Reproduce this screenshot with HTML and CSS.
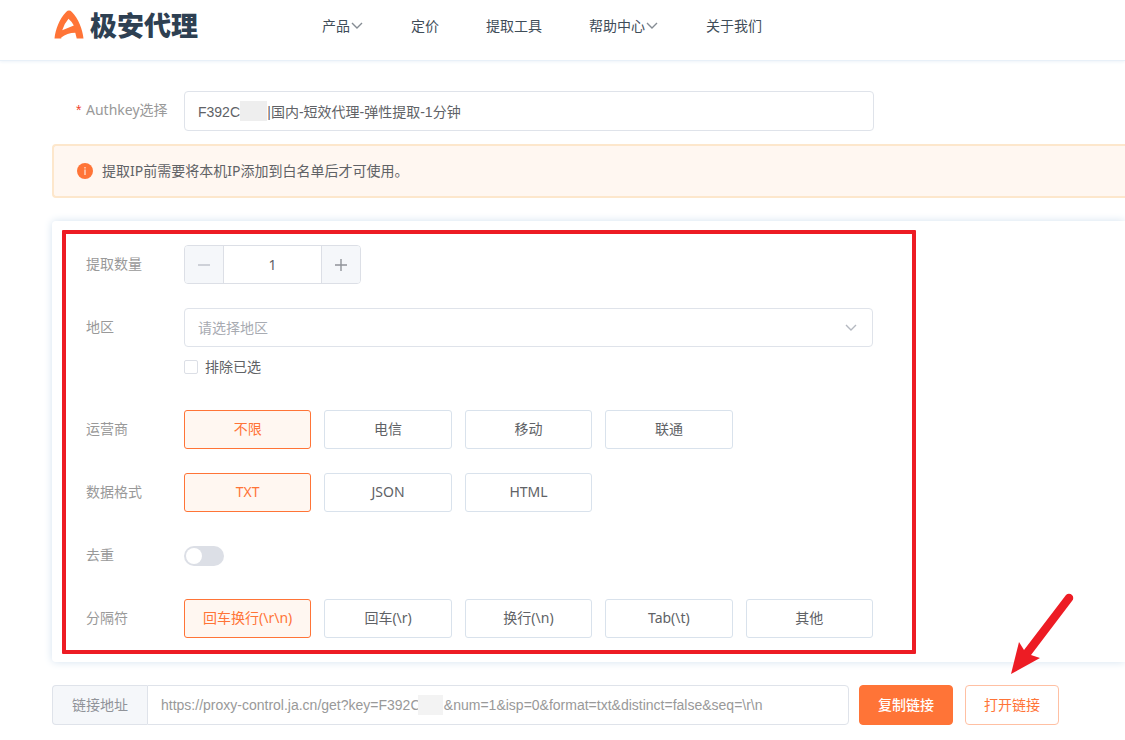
FILE: index.html
```
<!doctype html>
<html lang="zh-CN">
<head>
  <meta charset="UTF-8">
  <meta name="viewport" content="width=device-width, initial-scale=1">
  <title>极安代理 - 提取工具</title>
  <link rel="stylesheet" href="styles.css">
</head>
<body>
<header class="header">
  <a class="logo" href="#">
    <svg width="30" height="30" viewBox="0 0 30 30" aria-hidden="true">
      <path fill="#ff7437" fill-rule="evenodd" d="M0 29.500C1 20 5 9 12 2Q15 -1 18 2C25 9 29 20 30 29.500H23L21.500 23.500Q13 23.500 7 28.500V29.500ZM8 21L20 16Q18 12 14.500 9Q10 14 8 21Z"/>
    </svg>
    <span>极安代理</span>
  </a>
  <nav class="nav">
    <a href="#">产品<svg class="caret" viewBox="0 0 14 14"><path d="M2 4l5 5 5-5"/></svg></a>
    <a href="#">定价</a>
    <a href="#">提取工具</a>
    <a href="#">帮助中心<svg class="caret" viewBox="0 0 14 14"><path d="M2 4l5 5 5-5"/></svg></a>
    <a href="#">关于我们</a>
  </nav>
</header>

<main class="main">
  <div class="row">
    <label class="label required" for="authkey">Authkey选择</label>
    <div class="authkey">
      <input class="input" id="authkey" type="text" readonly value="F392C&nbsp;&nbsp;&nbsp;&nbsp;&nbsp;&nbsp;&nbsp;|国内-短效代理-弹性提取-1分钟">
      <span class="mask"></span>
    </div>
  </div>

  <div class="alert" role="alert">
    <svg width="16" height="16" viewBox="0 0 16 16" aria-hidden="true">
      <circle cx="8" cy="8" r="8" fill="#ff7437"/>
      <path fill="#fff" d="M7.500 4h1v1.500h-1zM7.500 6.500h1V12h-1z"/>
    </svg>
    <span>提取IP前需要将本机IP添加到白名单后才可使用。</span>
  </div>

  <form class="card">
    <div class="row">
      <label class="label" for="num">提取数量</label>
      <div class="stepper">
        <button type="button" disabled aria-label="减少"><svg viewBox="0 0 14 14"><path d="M1 7h12"/></svg></button>
        <input id="num" type="text" value="1">
        <button type="button" aria-label="增加"><svg viewBox="0 0 14 14"><path d="M1 7h12M7 1v12"/></svg></button>
      </div>
    </div>

    <div class="row">
      <label class="label" for="area">地区</label>
      <div class="field">
        <div class="select">
          <select class="input" id="area">
            <option>请选择地区</option>
          </select>
          <svg class="caret" viewBox="0 0 14 14"><path d="M2 5l5 5 5-5"/></svg>
        </div>
        <label class="check"><input type="checkbox">排除已选</label>
      </div>
    </div>

    <div class="row" role="radiogroup" aria-labelledby="isp">
      <span class="label" id="isp">运营商</span>
      <div class="field options">
        <label><input type="radio" name="isp" checked><span>不限</span></label>
        <label><input type="radio" name="isp"><span>电信</span></label>
        <label><input type="radio" name="isp"><span>移动</span></label>
        <label><input type="radio" name="isp"><span>联通</span></label>
      </div>
    </div>

    <div class="row" role="radiogroup" aria-labelledby="format">
      <span class="label" id="format">数据格式</span>
      <div class="field options">
        <label><input type="radio" name="format" checked><span>TXT</span></label>
        <label><input type="radio" name="format"><span>JSON</span></label>
        <label><input type="radio" name="format"><span>HTML</span></label>
      </div>
    </div>

    <div class="row">
      <label class="label" for="distinct">去重</label>
      <div class="field switch-wrap">
        <input class="switch" id="distinct" type="checkbox" role="switch">
      </div>
    </div>

    <div class="row" role="radiogroup" aria-labelledby="seq">
      <span class="label" id="seq">分隔符</span>
      <div class="field options">
        <label><input type="radio" name="seq" checked><span>回车换行(\r\n)</span></label>
        <label><input type="radio" name="seq"><span>回车(\r)</span></label>
        <label><input type="radio" name="seq"><span>换行(\n)</span></label>
        <label><input type="radio" name="seq"><span>Tab(\t)</span></label>
        <label><input type="radio" name="seq"><span>其他</span></label>
      </div>
    </div>
    <div class="highlight"></div>
  </form>

  <div class="link-bar">
    <div class="link-group">
      <label for="url">链接地址</label>
      <div class="url">
        <input class="input" id="url" type="text" readonly value="https://proxy-control.ja.cn/get?key=F392C&nbsp;&nbsp;&nbsp;&nbsp;&nbsp;&nbsp;&amp;num=1&amp;isp=0&amp;format=txt&amp;distinct=false&amp;seq=\r\n">
        <span class="mask"></span>
      </div>
    </div>
    <div class="actions">
      <button class="btn btn-primary" type="button">复制链接</button>
      <button class="btn" type="button">打开链接</button>
      <svg class="arrow" width="72" height="88" viewBox="0 0 72 88" aria-hidden="true">
        <path d="M6 84L14 52L19 60L61 5A4 4 0 0 1 67 11L26 65L35 68Z"/>
      </svg>
    </div>
  </div>
</main>
</body>
</html>
```
FILE: styles.css
```
* {
  box-sizing: border-box;
}

body {
  margin: 0;
  overflow-x: hidden;
  background: #fff;
  color: #606266;
  font: 14px/20px "Noto Sans", "Noto Sans CJK SC", sans-serif;
}

a {
  color: inherit;
  text-decoration: none;
}

input, select, button {
  margin: 0;
  font: inherit;
  color: inherit;
}

/* header */
.header {
  display: flex;
  align-items: center;
  height: 61px;
  padding: 0 0 8px 54px;
  border-bottom: 1px solid #e8f0f8;
  box-shadow: 0 1px 3px #edf3f9;
}

.logo {
  display: flex;
  align-items: center;
  gap: 6px;
  width: 268px;
  color: #2e4052;
  font-size: 27px;
  line-height: 30px;
  font-weight: 900;
}

.logo svg {
  height: 29px;
  margin-bottom: 4px;
}

.nav {
  display: flex;
  gap: 47px;
  color: #3f4d59;
}

.nav a {
  display: flex;
  align-items: center;
  white-space: nowrap;
}

.caret {
  width: 14px;
  height: 14px;
  fill: none;
  stroke: #858c93;
  stroke-width: 1.4;
}

/* form rows */
.main {
  padding: 30px 0 15px 52px;
}

.row {
  display: flex;
}

.label {
  flex: none;
  width: 132px;
  padding-left: 34px;
  color: #999;
  line-height: 38px;
}

.required {
  padding-left: 24px;
}

.required::before {
  content: "*";
  display: inline-block;
  width: 10px;
  color: #f0442e;
  font-family: "Liberation Sans", sans-serif;
}

.input {
  width: 100%;
  height: 40px;
  padding: 0 13px;
  border: 1px solid #dfe3ea;
  border-radius: 4px;
  outline: none;
  background: #fff;
  font-family: "Liberation Sans", "Noto Sans CJK SC", sans-serif;
}

.authkey {
  position: relative;
  flex: 1;
  max-width: 690px;
}

.mask {
  position: absolute;
  top: 10px;
  left: 56px;
  width: 27px;
  height: 20px;
  background: #eee;
}

.alert {
  display: flex;
  align-items: center;
  gap: 9px;
  height: 54px;
  margin: 13px 0 23px;
  padding-left: 23px;
  border: 2px solid #fde7cc;
  border-right: 0;
  border-radius: 4px 0 0 4px;
  background: #fff7f1;
}

.card {
  position: relative;
  display: grid;
  gap: 24px;
  margin-bottom: 23px;
  padding: 24px 0;
  border-radius: 4px 0 0 4px;
  box-shadow: 0 0 9px #d4e2ef;
}

.field {
  flex: 1;
  max-width: 689px;
}

.stepper {
  display: flex;
  width: 177px;
  height: 39px;
  border: 1px solid #dcdfe6;
  border-radius: 4px;
  overflow: hidden;
}

.stepper input {
  flex: 1;
  min-width: 0;
  border: 0;
  text-align: center;
  outline: none;
}

.stepper button {
  display: flex;
  align-items: center;
  justify-content: center;
  width: 39px;
  padding: 0;
  border: 0;
  border-right: 1px solid #dcdfe6;
  background: #f5f7fa;
}

.stepper button:last-child {
  border-right: 0;
  border-left: 1px solid #dcdfe6;
}

.stepper svg {
  width: 14px;
  height: 14px;
  fill: none;
  stroke: #909399;
  stroke-width: 1.4;
}

.stepper button:disabled svg {
  stroke: #c0c4cc;
}

.select {
  position: relative;
}

.select .input {
  display: block;
  height: 39px;
  appearance: none;
  color: #a8abb2;
}

.select .caret {
  position: absolute;
  top: 12px;
  right: 15px;
  stroke: #b4b8c0;
  pointer-events: none;
}

.check {
  display: flex;
  align-items: center;
  gap: 7px;
  width: max-content;
  height: 39px;
}

.check input {
  width: 14px;
  height: 14px;
  border: 1px solid #dcdfe6;
  border-radius: 2px;
  background: #fff;
  appearance: none;
}

.check input:checked {
  background: #ff7437;
}

.options {
  display: grid;
  grid-template-columns: repeat(5, 1fr);
  gap: 13px;
}

.options label {
  position: relative;
}

.options input {
  position: absolute;
  opacity: 0;
}

.options span {
  display: block;
  height: 39px;
  border: 1px solid #d9e2ec;
  border-radius: 3px;
  line-height: 36px;
  text-align: center;
  white-space: nowrap;
}

.options input:checked + span {
  border-color: #ff7437;
  background: #fff7f1;
  color: #ff7437;
}

.switch-wrap {
  display: flex;
  align-items: center;
  height: 39px;
}

.switch {
  width: 40px;
  height: 20px;
  padding: 2px;
  border-radius: 10px;
  background: #dcdfe6;
  appearance: none;
}

.switch::before {
  content: "";
  display: block;
  width: 16px;
  height: 16px;
  border-radius: 50%;
  background: #fff;
}

.switch:checked {
  padding-left: 22px;
  background: #ff7437;
}

.highlight {
  position: absolute;
  top: 9px;
  bottom: 8px;
  left: 10px;
  width: 854px;
  border: 4px solid #ed1c24;
  border-radius: 1px;
  pointer-events: none;
}

/* result link */
.link-bar {
  display: flex;
  gap: 10px;
  max-width: 1007px;
}

.link-group {
  display: flex;
  flex: 1;
}

.link-group label {
  width: 95px;
  border: 1px solid #dfe3ea;
  border-right: 0;
  border-radius: 4px 0 0 4px;
  background: #f5f7fa;
  color: #909399;
  line-height: 38px;
  text-align: center;
}

.url {
  position: relative;
  flex: 1;
}

.url .input {
  border-radius: 0 4px 4px 0;
  color: #999;
}

.url .mask {
  left: 271px;
  width: 25px;
  background: #f3f3f3;
}

.actions {
  position: relative;
  display: flex;
  gap: 12px;
}

.btn {
  width: 94px;
  height: 40px;
  padding: 0;
  border: 1px solid #ffc0a3;
  border-radius: 4px;
  background: #fff;
  color: #ff7437;
}

.btn-primary {
  border-color: #ff7437;
  background: #ff7437;
  color: #fff;
  font-weight: 500;
}

.arrow {
  position: absolute;
  right: -18px;
  bottom: 47px;
  fill: #ed1c24;
  pointer-events: none;
}
```
